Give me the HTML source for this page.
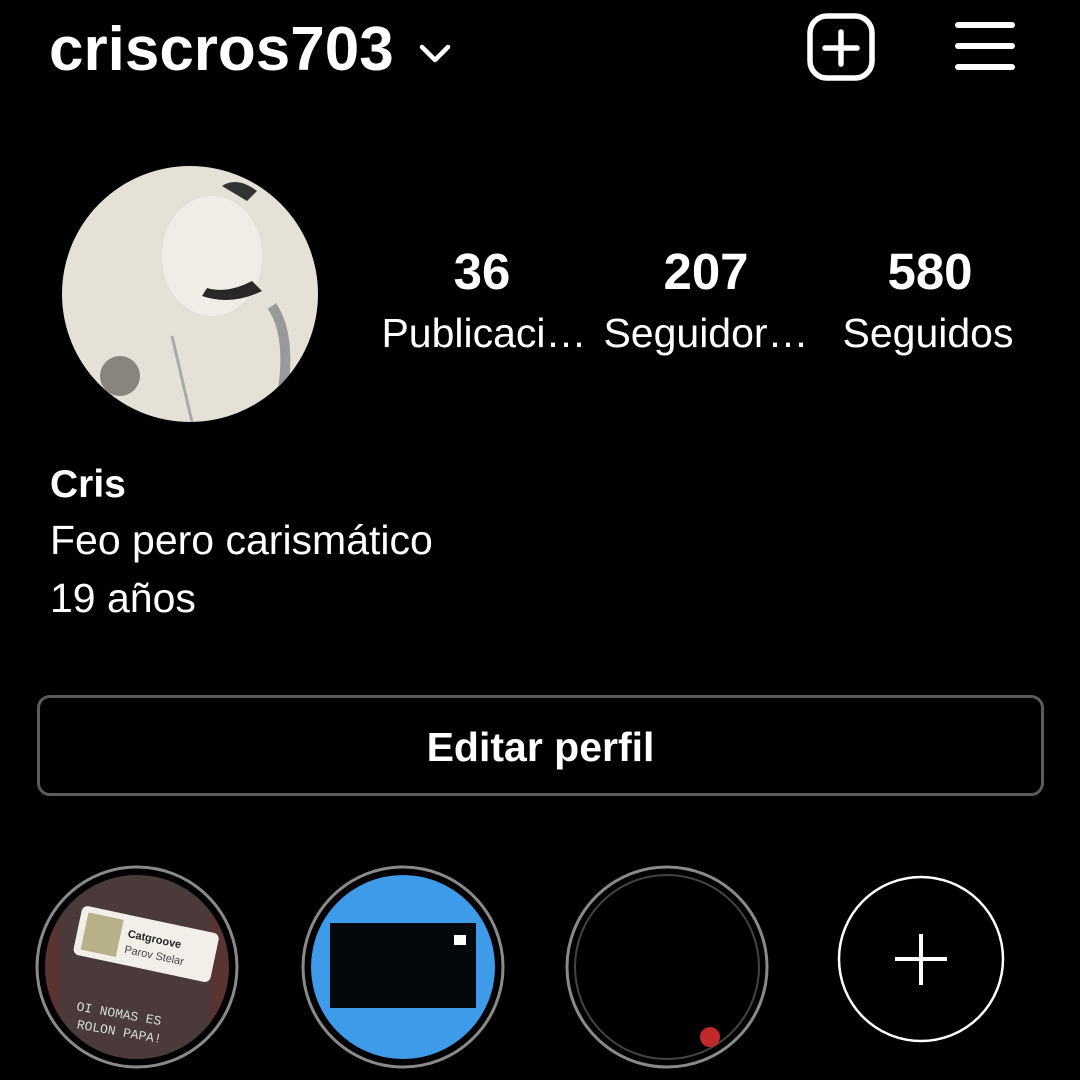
<!DOCTYPE html>
<html style="overflow:hidden;height:1080px"><head><meta charset="utf-8"><style>
body{margin:0;width:1080px;height:1080px;background:#000;overflow:hidden;position:relative;font-family:"Liberation Sans",sans-serif;color:#fff}
.a{position:absolute}
.num{font-weight:bold;font-size:51px;text-align:center;width:240px}
.lab{font-size:41px;text-align:center;width:240px;white-space:nowrap}
</style></head><body>
<div class="a" style="left:49px;top:12px;font-size:62px;font-weight:bold;line-height:76px">criscros703</div>
<svg class="a" style="left:418px;top:40px" width="36" height="30"><polyline points="4,7 17,20 30,7" fill="none" stroke="#fff" stroke-width="4.5" stroke-linecap="round" stroke-linejoin="round"/></svg>
<svg class="a" style="left:806px;top:12px" width="70" height="70"><rect x="4" y="4" width="62" height="62" rx="17" fill="none" stroke="#fff" stroke-width="5.5"/><line x1="35" y1="20" x2="35" y2="52" stroke="#fff" stroke-width="5.5" stroke-linecap="round"/><line x1="19" y1="36" x2="51" y2="36" stroke="#fff" stroke-width="5.5" stroke-linecap="round"/></svg>
<svg class="a" style="left:950px;top:16px" width="70" height="60"><g stroke="#fff" stroke-width="6" stroke-linecap="round"><line x1="8" y1="9" x2="62" y2="9"/><line x1="8" y1="30" x2="62" y2="30"/><line x1="8" y1="51" x2="62" y2="51"/></g></svg>

<svg class="a" style="left:62px;top:166px" width="256" height="256"><defs><clipPath id="c"><circle cx="128" cy="128" r="128"/></clipPath></defs><g clip-path="url(#c)"><rect width="256" height="256" fill="#e5e1d7"/><ellipse cx="150" cy="90" rx="50" ry="60" fill="#f0ede6"/><path d="M140 130 Q170 140 200 125 L190 115 Q165 128 145 122 Z" fill="#2a2826"/><path d="M160 20 Q175 10 195 25 L185 35 Z" fill="#333"/><circle cx="58" cy="210" r="20" fill="#8a857c"/><path d="M110 170 L130 256" stroke="#aaa" stroke-width="3"/><path d="M210 140 Q230 170 220 230" stroke="#999" stroke-width="10" fill="none"/></g></svg>

<div class="a num" style="left:362px;top:242px">36</div>
<div class="a num" style="left:586px;top:242px">207</div>
<div class="a num" style="left:810px;top:242px">580</div>
<div class="a lab" style="left:364px;top:310px">Publicaci…</div>
<div class="a lab" style="left:586px;top:310px">Seguidor…</div>
<div class="a lab" style="left:808px;top:310px">Seguidos</div>

<div class="a" style="left:50px;top:463px;font-size:39px;font-weight:bold">Cris</div>
<div class="a" style="left:50px;top:517px;font-size:41px">Feo pero carismático</div>
<div class="a" style="left:50px;top:575px;font-size:41px">19 años</div>

<div class="a" style="left:37px;top:695px;width:1001px;height:95px;border:3px solid #5b5b5b;border-radius:13px;text-align:center;line-height:98px;font-size:41px;font-weight:bold">Editar perfil</div>

<svg class="a" style="left:0;top:850px" width="1080" height="230">
<g fill="none" stroke="#8a8a8a" stroke-width="3">
<circle cx="137" cy="117" r="100"/><circle cx="403" cy="117" r="100"/><circle cx="667" cy="117" r="100"/></g>
<defs><clipPath id="s1"><circle cx="137" cy="117" r="92"/></clipPath><clipPath id="s2"><circle cx="403" cy="117" r="92"/></clipPath></defs>
<g clip-path="url(#s1)"><rect x="40" y="20" width="200" height="200" fill="#5a3432"/><rect x="60" y="20" width="150" height="200" fill="#4a3a3a"/><g transform="rotate(12 150 100)"><rect x="75" y="70" width="140" height="50" rx="6" fill="#f2efe8"/><rect x="82" y="76" width="36" height="38" fill="#b8b088"/><text x="125" y="92" font-size="11" font-weight="bold" fill="#222" font-family="Liberation Sans">Catgroove</text><text x="125" y="108" font-size="11" fill="#444" font-family="Liberation Sans">Parov Stelar</text></g><text x="75" y="168" font-size="13" fill="#ddd" font-family="Liberation Mono" transform="rotate(10 120 170)">OI NOMAS ES</text><text x="75" y="186" font-size="13" fill="#ddd" font-family="Liberation Mono" transform="rotate(10 120 190)">ROLON PAPA!</text></g>
<g clip-path="url(#s2)"><rect x="300" y="20" width="210" height="200" fill="#3d9be9"/><rect x="330" y="73" width="146" height="85" fill="#04070c"/><rect x="454" y="85" width="12" height="10" fill="#fff"/></g>
<circle cx="667" cy="117" r="92" fill="none" stroke="#444" stroke-width="2"/>
<circle cx="710" cy="187" r="10" fill="#c0282a"/>
<circle cx="921" cy="109" r="82" fill="none" stroke="#fff" stroke-width="2.5"/>
<line x1="921" y1="84" x2="921" y2="135" stroke="#fff" stroke-width="4"/><line x1="895" y1="109" x2="947" y2="109" stroke="#fff" stroke-width="4"/>
<text x="871" y="260" font-size="40" fill="#fff" font-family="Liberation Sans">N</text>
</svg>
</body></html>
